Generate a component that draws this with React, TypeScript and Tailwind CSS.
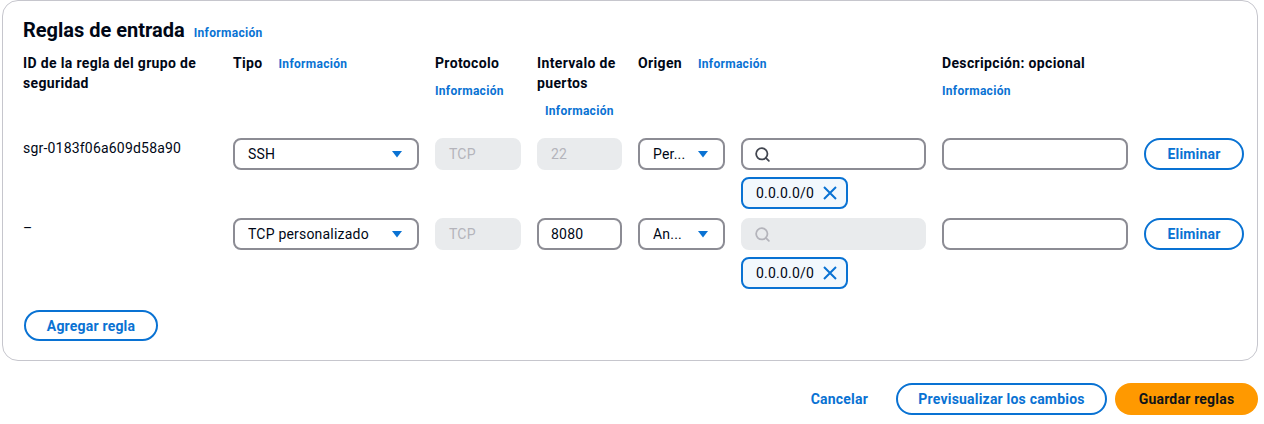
import { Search } from "lucide-react";

const font = { fontFamily: "Roboto, 'Noto Sans', sans-serif" };

const Info = ({ className = "" }: { className?: string }) => (
  <span className={`text-[12px] font-bold leading-5 tracking-[0.3px] text-[#0972d3] ${className}`}>
    Información
  </span>
);

const Caret = () => (
  <svg width="16" height="16" viewBox="0 0 16 16" className="shrink-0">
    <path d="M3 5h10l-5 6.5z" fill="#0972d3" />
  </svg>
);

const Cross = () => (
  <svg width="16" height="16" viewBox="0 0 16 16" className="shrink-0">
    <path d="M2 2l12 12M14 2L2 14" stroke="#0972d3" strokeWidth="2" fill="none" />
  </svg>
);

const SelectBox = ({ value }: { value: string }) => (
  <div className="flex h-8 items-center justify-between rounded-lg border-2 border-[#8c8c94] bg-white pl-[13px] pr-3">
    <span className="truncate text-sm">{value}</span>
    <Caret />
  </div>
);

const DisabledBox = ({ value }: { value: string }) => (
  <div className="flex h-8 items-center rounded-lg border-2 border-[#e9ebed] bg-[#e9ebed] px-3 text-sm text-[#b4b4bb]">
    {value}
  </div>
);

const TextBox = ({ value = "" }: { value?: string }) => (
  <div className="flex h-8 items-center rounded-lg border-2 border-[#8c8c94] bg-white px-3 text-sm">
    {value}
  </div>
);

const SearchBox = ({ disabled = false }: { disabled?: boolean }) => (
  <div
    className={`flex h-8 items-center rounded-lg border-2 px-[11px] ${
      disabled ? "border-[#e9ebed] bg-[#e9ebed]" : "border-[#8c8c94] bg-white"
    }`}
  >
    <Search
      className={`size-[17px] ${disabled ? "text-[#b4b4bb]" : "text-[#424650]"}`}
      strokeWidth={2.5}
    />
  </div>
);

const Chip = () => (
  <div className="mt-[7px] flex h-8 w-[107px] items-center justify-between rounded-lg border-2 border-[#0972d3] bg-[#f2f8fd] pl-[13px] pr-[8px] text-sm">
    <span>0.0.0.0/0</span>
    <Cross />
  </div>
);

const OutlineButton = ({ label, className = "" }: { label: string; className?: string }) => (
  <button
    className={`flex h-8 items-center justify-center rounded-full border-2 border-[#0972d3] bg-white px-5 text-sm font-bold tracking-[0.2px] text-[#0972d3] ${className}`}
  >
    {label}
  </button>
);

const rows = [
  { id: "sgr-0183f06a609d58a90", tipo: "SSH", port: "22", portDisabled: true, origen: "Per...", searchDisabled: false },
  { id: "–", tipo: "TCP personalizado", port: "8080", portDisabled: false, origen: "An...", searchDisabled: true },
];

const cols = "grid grid-cols-[194px_186px_86px_85px_87px_185px_186px_100px] gap-x-4";

export default function App() {
  return (
    <div className="min-h-[424px] bg-white text-[#000716] tracking-[0.2px]" style={font}>
      <div className="ml-[2px] w-[1256px]">
        <div className="rounded-2xl border border-[#c6c6cd] px-5 pb-[19px] pt-[17px]">
          <div className="flex items-baseline gap-[9px]">
            <h2 className="text-[20px] font-bold leading-6 tracking-normal">Reglas de entrada</h2>
            <Info />
          </div>

          {/* Column headers */}
          <div className={`${cols} mt-[10px] text-sm font-bold leading-5 tracking-[0.35px]`}>
            <div>ID de la regla del grupo de seguridad</div>
            <div className="flex items-baseline gap-4">
              <span>Tipo</span>
              <Info />
            </div>
            <div>
              <div>Protocolo</div>
              <Info className="mt-2 block" />
            </div>
            <div>
              <div>Intervalo de puertos</div>
              <Info className="mt-2 block pl-2" />
            </div>
            <div className="col-span-2 flex items-baseline gap-4">
              <span>Origen</span>
              <Info />
            </div>
            <div>
              <div>Descripción: opcional</div>
              <Info className="mt-2 block" />
            </div>
            <div />
          </div>

          {/* Rule rows */}
          <div className="mt-[17px] flex flex-col gap-[9px]">
            {rows.map((r) => (
              <div key={r.id} className={`${cols} items-start`}>
                <div className="text-sm leading-5">{r.id}</div>
                <SelectBox value={r.tipo} />
                <DisabledBox value="TCP" />
                {r.portDisabled ? <DisabledBox value={r.port} /> : <TextBox value={r.port} />}
                <SelectBox value={r.origen} />
                <div>
                  <SearchBox disabled={r.searchDisabled} />
                  <Chip />
                </div>
                <TextBox />
                <OutlineButton label="Eliminar" />
              </div>
            ))}
          </div>

          <div className="mt-[21px] flex">
            <OutlineButton label="Agregar regla" className="ml-px h-[31px] w-[134px]" />
          </div>
        </div>

        {/* Footer actions */}
        <div className="mt-[22px] flex items-center justify-end gap-2">
          <button className="h-8 px-5 text-sm font-bold text-[#0972d3]">Cancelar</button>
          <OutlineButton label="Previsualizar los cambios" className="w-[211px]" />
          <button className="h-8 w-[143px] rounded-full bg-[#ff9900] px-5 text-sm font-bold text-[#0f141a]">
            Guardar reglas
          </button>
        </div>
      </div>
    </div>
  );
}
